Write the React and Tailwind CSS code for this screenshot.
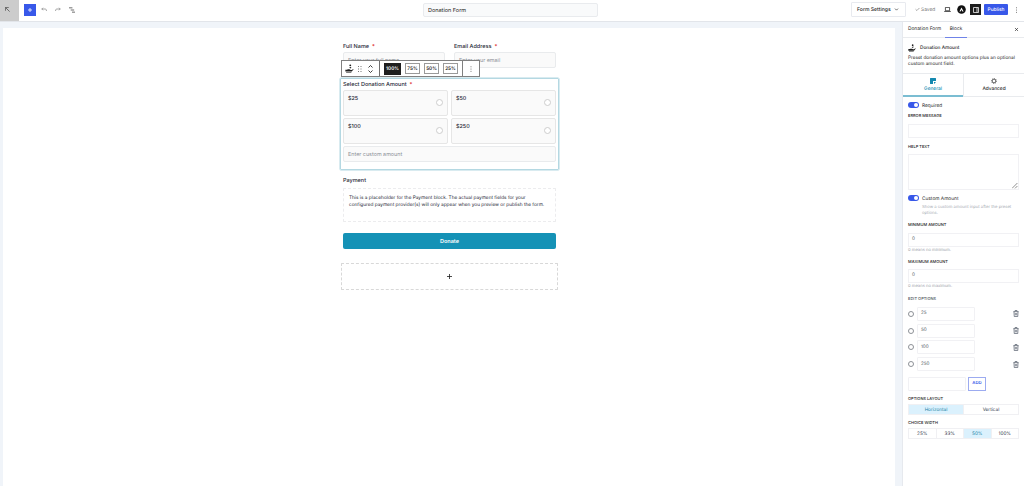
import React from 'react';
import { Check, ChevronDown, X } from 'lucide-react';

const WIDTHS = ['100%', '75%', '50%', '25%'];
const OPTIONS = ['25', '50', '100', '250'];

const HandIcon = ({ className }) => (
    <svg viewBox="0 0 24 24" className={className} fill="currentColor">
        <circle cx="14" cy="3.5" r="2.5" />
        <path d="M11 10q3-3 6-2l-2 4z" />
        <path d="M1 15h4l3-1h4l3 2h3l4-3 1 1-5 6H1z" />
        <path d="M3 22h14v1.5H3z" />
    </svg>
);

const Dots = ({ className }) => (
    <svg viewBox="0 0 4 16" className={className} fill="currentColor">
        <circle cx="2" cy="2" r="1.4" />
        <circle cx="2" cy="8" r="1.4" />
        <circle cx="2" cy="14" r="1.4" />
    </svg>
);

const UndoIcon = ({ className }) => (
    <svg viewBox="0 0 24 18" className={className} fill="none" stroke="currentColor" strokeWidth="3">
        <path d="M8 2 3 7l5 5M3 7h14q5 0 5 8" />
    </svg>
);

const TrashIcon = () => (
    <svg viewBox="0 0 18 21" className="h-[7px] w-[6px] text-[#4b5563]" fill="none" stroke="currentColor" strokeWidth="2">
        <path d="M1 5h16M6 5V1.5h6V5M3 5l.7 14.5h10.6L15 5M7 9v7M11 9v7" />
    </svg>
);

function TopBar() {
    return (
        <header className="flex h-[22px] shrink-0 border-b border-[#e2e5ea] bg-white text-[#1e1e1e]">
            <div className="flex w-[19px] items-center bg-[#cccccc] pb-[2px] pl-[5px]">
                <svg viewBox="0 0 12 12" className="h-[5px] w-[5px]" fill="none" stroke="#555" strokeWidth="2">
                    <path d="M1 9V1h8M1 1l10 10" />
                </svg>
            </div>
            <div className="flex w-[404px] items-center pb-[2px] pl-[5px]">
                <div className="flex h-[12px] w-[12px] items-center justify-center bg-[#3858e9] text-white">
                    <svg viewBox="0 0 8 8" className="h-1 w-1" stroke="currentColor" strokeWidth="1.6"><path d="M4 0v8M0 4h8" /></svg>
                </div>
                <UndoIcon className="ml-[5px] h-[5px] w-[6px] text-[#8a8a8a]" />
                <UndoIcon className="ml-2 h-[5px] w-[6px] -scale-x-100 text-[#8a8a8a]" />
                <svg viewBox="0 0 14 14" className="ml-2 h-[6px] w-[6px] text-[#555]" fill="none" stroke="currentColor" strokeWidth="2">
                    <path d="M0 2h8M4 7h8M7 12h7" />
                </svg>
            </div>
            <div className="mt-[3px] flex h-[14px] w-[175px] items-center rounded-[2px] border border-[#e9ebee] bg-[#f9fafb] pl-1 pt-[2px] text-[5.5px] text-[#1e1e1e]">
                Donation Form
            </div>
            <div className="flex flex-1 items-center justify-end pb-[2px] text-[5px]">
                <div className="flex h-[15px] w-[55px] items-center justify-between rounded-[1px] border border-[#e8eaef] pl-[5px] pr-[6px] text-[5.1px] font-medium">
                    <span className="pt-[2px]">Form Settings</span>
                    <ChevronDown className="h-[5px] w-[5px]" strokeWidth={3} />
                </div>
                <div className="ml-[9px] flex w-[29px] items-center gap-px text-[4.9px] text-[#757575]">
                    <Check className="h-[5px] w-[5px]" strokeWidth={3} />
                    <span className="pt-[2px]">Saved</span>
                </div>
                <svg viewBox="0 0 16 12" className="h-[5px] w-[7px]" fill="none" stroke="currentColor" strokeWidth="1.8">
                    <path d="M3 1h10v8H3zM0 11h16" />
                </svg>
                <svg viewBox="0 0 18 18" className="ml-[6px] h-[9px] w-[9px]">
                    <circle cx="9" cy="9" r="8.6" fill="#111" />
                    <path d="M4.8 13 9 5l4.2 8h-2.4L9 9.6 7.2 13z" fill="white" />
                </svg>
                <div className="ml-[4px] flex h-[11px] w-[11px] items-center justify-center bg-[#1e1e1e] text-white">
                    <svg viewBox="0 0 12 12" className="h-[6px] w-[6px]" fill="none" stroke="currentColor" strokeWidth="1.5">
                        <path d="M1 1h10v10H1zM8 1v10" />
                    </svg>
                </div>
                <div className="ml-[3px] flex h-[11px] w-[24px] items-center justify-center rounded-[1px] bg-[#3858e9] pt-[2px] text-[4.8px] font-medium text-white">Publish</div>
                <Dots className="ml-[7px] mr-[6px] h-[6px] w-[3px] text-[#555]" />
            </div>
        </header>
    );
}

const FieldLabel = ({ children, required }) => (
    <div className="flex h-2 items-center pt-px text-[5.5px] font-medium leading-[8px] text-[#1f2937]">
        {children}
        {required && <span className="ml-[3px] text-[#dc2626]">*</span>}
    </div>
);

const FormInput = ({ text, className }) => (
    <div className={`flex h-4 items-center rounded-[2px] border border-[#e9ebed] bg-[#fafafa] pl-1 pt-[2px] text-[5.4px] text-[#8b9097] ${className}`}>{text}</div>
);

function BlockToolbar() {
    return (
        <div className="absolute left-[-2px] top-[18px] z-10 flex h-[17px] w-[139px] border border-[#808080] bg-white text-[#1e1e1e]">
            <div className="flex w-[38px] items-center border-r border-[#707070] pl-[3px]">
                <HandIcon className="h-[9px] w-[9px]" />
                <svg viewBox="0 0 8 12" className="ml-[4px] h-[6px] w-[4px] text-[#777]" fill="currentColor">
                    <path d="M0 0h2v2H0zM5 0h2v2H5zM0 5h2v2H0zM5 5h2v2H5zM0 10h2v2H0zM5 10h2v2H5z" />
                </svg>
                <svg viewBox="0 0 10 16" className="ml-[6px] h-[8px] w-[5px]" fill="none" stroke="currentColor" strokeWidth="1.7">
                    <path d="m1 5 4-4 4 4M1 11l4 4 4-4" />
                </svg>
            </div>
            <div className="flex w-[83px] items-center gap-[4px] border-r border-[#808080] pl-[4px] text-[4.7px] font-semibold">
                {WIDTHS.map((width, i) => (
                    <div
                        key={width}
                        className={`flex items-center justify-center pt-[2px] ${i === 0 ? 'h-[12px] w-[17px] bg-[#1e1e1e] text-white' : 'h-[11px] w-[15px] border border-[#9a9a9a]'}`}
                    >
                        {width}
                    </div>
                ))}
            </div>
            <div className="flex flex-1 items-center justify-center">
                <Dots className="h-[6px] w-[2px] text-[#555]" />
            </div>
        </div>
    );
}

function Canvas() {
    return (
        <main className="flex flex-1 bg-[#f0f4f9] pl-[3px] pr-[7px] pt-[6px]">
            <div className="flex-1 bg-white pl-[337px] pt-[14px]">
                <div className="relative ml-[3px] flex w-[213px] gap-[9px]">
                    <div className="w-[102px]">
                        <FieldLabel required>Full Name</FieldLabel>
                        <FormInput text="Enter your full name" className="mt-[2px]" />
                    </div>
                    <div className="w-[102px]">
                        <FieldLabel required>Email Address</FieldLabel>
                        <FormInput text="Enter your email" className="mt-[2px]" />
                    </div>
                    <BlockToolbar />
                </div>
                <section className="mt-[10px] h-[92px] w-[219px] rounded-[1px] border border-[#b4d8e2] px-[2px] pt-px shadow-[0_0_0_0.5px_#b4d8e2]">
                    <FieldLabel required>Select Donation Amount</FieldLabel>
                    <div className="mt-[2px] grid grid-cols-2 gap-x-[3px] gap-y-[2px]">
                        {OPTIONS.map(amount => (
                            <div key={amount} className="flex h-[26px] items-center justify-between rounded-[2px] border border-[#e6e6e6] bg-[#fafafa] pl-1 pr-[4px] text-[5.4px] text-[#1f2937]">
                                <span className="mb-[7px] font-medium">${amount}</span>
                                <span className="mb-px h-[7px] w-[7px] rounded-full border border-[#cdcdcd] bg-white" />
                            </div>
                        ))}
                    </div>
                    <FormInput text="Enter custom amount" className="mt-[2px]" />
                </section>
                <div className="ml-[3px] mt-[6px] w-[213px]">
                    <FieldLabel>Payment</FieldLabel>
                    <div className="mt-[4px] h-[34px] whitespace-nowrap rounded-[1px] border border-dashed border-[#ececee] pl-[5px] pt-[6px] text-[4.76px] leading-[7px] text-[#1f2937]">
                        This is a placeholder for the Payment block. The actual payment fields for your<br />
                        configured payment provider(s) will only appear when you preview or publish the form.
                    </div>
                    <div className="mt-[11px] flex h-4 items-center justify-center rounded-[2px] bg-[#1592b6] pt-[2px] text-[5.5px] font-semibold text-white">Donate</div>
                </div>
                <div className="ml-px mt-[14px] flex h-[27px] w-[217px] items-center justify-center rounded-[1px] border border-dashed border-[#d8d8d8]">
                    <svg viewBox="0 0 10 10" className="mr-px h-[5px] w-[5px]" stroke="#1e1e1e" strokeWidth="1.6"><path d="M5 0v10M0 5h10" /></svg>
                </div>
            </div>
        </main>
    );
}

const Toggle = ({ label }) => (
    <div className="flex h-[6px] items-center">
        <span className="flex h-[6px] w-[11px] items-center justify-end rounded-full bg-[#3858e9] pr-px">
            <span className="h-1 w-1 rounded-full bg-white" />
        </span>
        <span className="ml-[3px] pt-[2px] text-[4.8px] leading-[6px] text-[#1e1e1e]">{label}</span>
    </div>
);

const Caption = ({ children, className }) => (
    <div className={`text-[4px] font-medium uppercase leading-[6px] ${className}`}>{children}</div>
);

const Box = ({ children, className }) => (
    <div className={`flex items-center border border-[#f1f1f4] bg-white pl-[3px] text-[4.6px] text-[#50575e] ${className}`}>{children}</div>
);

const Segmented = ({ items, active, className }) => (
    <div className={`flex h-[11px] border border-[#f0f0f3] text-[4.7px] text-[#374151] ${className}`}>
        {items.map(item => (
            <div key={item} className={`flex flex-1 items-center justify-center border-r border-[#f0f0f3] pt-[2px] last:border-r-0 ${item === active ? 'bg-[#dbf1fd] text-[#1d86a8]' : ''}`}>{item}</div>
        ))}
    </div>
);

function Sidebar() {
    return (
        <aside className="w-[122px] border-l border-[#e6e9ee] bg-white text-[#1e1e1e]">
            <div className="flex h-4 border-b border-[#e9ebee] text-[4.8px]">
                <div className="flex w-[42px] items-center pl-[5px] pt-px">Donation Form</div>
                <div className="-mb-px flex w-[22px] items-center justify-center border-b border-[#6f83e8] pt-px">Block</div>
                <div className="flex flex-1 items-center justify-end pr-[5px]"><X className="h-[5px] w-[5px]" strokeWidth={3} /></div>
            </div>
            <div className="h-9 border-b border-[#e9ebee] pl-[5px] pt-[6px]">
                <div className="flex h-2 items-center text-[4.75px] font-medium">
                    <HandIcon className="mr-1 h-[8px] w-[8px]" />
                    <span className="pt-[2px]">Donation Amount</span>
                </div>
                <div className="mt-[3px] whitespace-nowrap text-[4.7px] leading-[6.4px]">
                    Preset donation amount options plus an optional<br />custom amount field.
                </div>
            </div>
            <div className="flex h-[23px] text-[4.8px] font-medium">
                <div className="flex w-[60px] flex-col items-center border-b-2 border-[#7bbdd2] pt-1 text-[#1489b0]">
                    <svg viewBox="0 0 12 12" className="h-[6px] w-[6px]" fill="currentColor"><path d="M0 1q0-1 1-1h10q1 0 1 1v5H6v6H1q-1 0-1-1zM8 8h4l-4 4z" /></svg>
                    <span className="mt-[2px] leading-[7px]">General</span>
                </div>
                <div className="flex flex-1 flex-col items-center border-b border-l border-[#e9ebee] pt-1">
                    <svg viewBox="0 0 12 12" className="h-[6px] w-[6px]" fill="none" stroke="#333">
                        <circle cx="6" cy="6" r="3.8" strokeWidth="1.6" />
                        <circle cx="6" cy="6" r="5.2" strokeWidth="1" strokeDasharray="2 2" />
                    </svg>
                    <span className="mt-[2px] leading-[7px]">Advanced</span>
                </div>
            </div>
            <div className="pl-[5px] pr-[5px] pt-[5px]">
                <Toggle label="Required" />
                <Caption className="mt-[5px]">Error message</Caption>
                <Box className="mt-[5px] h-[14px]" />
                <Caption className="mt-[6px]">Help text</Caption>
                <Box className="mt-[4px] h-9 items-end justify-end">
                    <svg viewBox="0 0 10 10" className="h-[6px] w-[6px]" stroke="#666" strokeWidth="1.2"><path d="M0 9 9 0M5 9l4-4" /></svg>
                </Box>
                <div className="mt-[5px]"><Toggle label="Custom Amount" /></div>
                <div className="ml-[14px] mt-[4px] whitespace-nowrap text-[4.22px] leading-[6.4px] text-[#a3a8b0]">
                    Show a custom amount input after the preset<br />options.
                </div>
                <Caption className="mt-[4px]">Minimum amount</Caption>
                <Box className="mt-[5px] h-[14px] pt-[2px]">0</Box>
                <div className="mt-px text-[4.15px] leading-[6px] text-[#9aa0a8]">0 means no minimum.</div>
                <Caption className="mt-[5px]">Maximum amount</Caption>
                <Box className="mt-[4px] h-[14px] pt-[2px]">0</Box>
                <div className="mt-px text-[4.15px] leading-[6px] text-[#9aa0a8]">0 means no maximum.</div>
                <Caption className="mt-[6px] text-[#50575e]">Edit options</Caption>
                <div className="mt-[5px] flex flex-col gap-[2.8px]">
                    {OPTIONS.map(value => (
                        <div key={value} className="flex h-[14px] items-center">
                            <span className="h-[6px] w-[6px] rounded-full border border-[#8d9197]" />
                            <Box className="ml-[3px] h-[14px] w-[58px] rounded-[1px] pt-[2px]">{value}</Box>
                            <span className="ml-auto"><TrashIcon /></span>
                        </div>
                    ))}
                </div>
                <div className="mt-[6px] flex gap-[2px]">
                    <Box className="h-[14px] w-[58px] rounded-[1px]" />
                    <div className="flex h-[14px] w-[18px] items-center justify-center border border-[#9cabf0] pt-px text-[4.3px] font-semibold text-[#3858e9]">ADD</div>
                </div>
                <Caption className="mt-[5px]">Options layout</Caption>
                <Segmented items={['Horizontal', 'Vertical']} active="Horizontal" className="mt-[2px]" />
                <Caption className="mt-[5px]">Choice width</Caption>
                <Segmented items={['25%', '33%', '50%', '100%']} active="50%" className="mt-[2px]" />
            </div>
        </aside>
    );
}

export default function App() {
    return (
        <div className="flex h-[486px] w-[1024px] flex-col overflow-hidden bg-white font-['Inter',sans-serif] [text-rendering:geometricPrecision]">
            <TopBar />
            <div className="flex flex-1">
                <Canvas />
                <Sidebar />
            </div>
        </div>
    );
}
